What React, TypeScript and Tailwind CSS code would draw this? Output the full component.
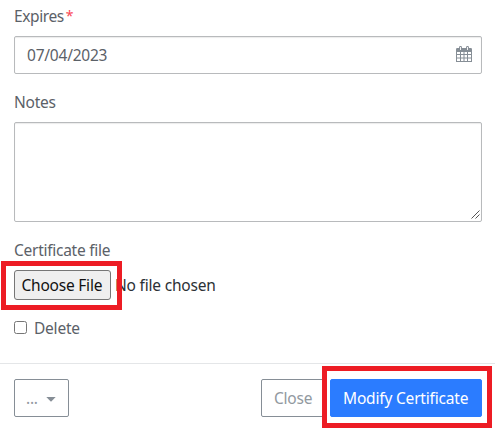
function CalendarIcon() {
  return (
    <svg width="16" height="17" viewBox="0 0 16 17" className="mr-[9px] mb-[3px] shrink-0">
      <path d="M0 4.2Q0 3 1.2 3h13.6Q16 3 16 4.2V17H0z" fill="#868e96" />
      <path
        d="M1 7h3v2H1zM5 7h2.5v2H5zM8.5 7H11v2H8.5zM12 7h3v2h-3zM1 10h3v2.5H1zM5 10h2.5v2.5H5zM8.5 10H11v2.5H8.5zM12 10h3v2.5h-3zM1 13.5h3V16H1zM5 13.5h2.5V16H5zM8.5 13.5H11V16H8.5zM12 13.5h3V16h-3z"
        fill="#fff"
      />
      <rect x="3" y="1" width="3" height="4.6" rx="1.4" fill="#868e96" />
      <rect x="10" y="1" width="3" height="4.6" rx="1.4" fill="#868e96" />
      <path d="M4.5 2v3M11.5 2v3" stroke="#fff" strokeWidth=".9" />
    </svg>
  );
}

export default function App() {
  return (
    <div className="flex h-[431px] w-[495px] flex-col overflow-hidden bg-white font-['Noto_Sans',sans-serif] text-[15.5px] leading-6 tracking-[-0.22px] text-[#5b6168]">
      <div className="flex h-[363px] flex-col pr-[13px] pl-[14px]">
        <label className="mt-[4px] flex h-6">
          <span className="tracking-[-0.4px]">Expires</span>
          <span className="ml-[2px] text-[14px] text-[#fa4654]">*</span>
        </label>
        <div className="mt-[8px] flex h-[38px] items-center justify-between rounded-[2px] border border-[#b8babc] pl-3 shadow-[inset_0_1px_1px_rgba(0,0,0,0.08)]">
          <span>07/04/2023</span>
          <CalendarIcon />
        </div>
        <label className="mt-[16px] h-6">Notes</label>
        <div className="mt-[8px] flex h-[100px] items-end justify-end rounded-[2px] border border-[#b8babc] shadow-[inset_0_1px_1px_rgba(0,0,0,0.08)]">
          <svg width="10" height="10" viewBox="0 0 10 10" className="mb-px">
            <path d="M.5 8.5l8-8M4.5 8.5l4-4" stroke="#555" strokeWidth="1" />
          </svg>
        </div>
        <label className="mt-[16px] h-6 tracking-[-0.27px]">Certificate file</label>
        <div className="mt-[8px] flex h-[30px] items-center text-[#2c3136]">
          <div className="relative flex h-[30px] w-[97px] items-center rounded-[3px] border border-[#767676] bg-[#efefef] pl-[6.5px] whitespace-nowrap text-[#111]">
            <span>Choose File</span>
            <div className="absolute -top-[10px] -left-[14px] h-[49px] w-[121px] border-5 border-[#ed1c24]" />
          </div>
          <span className="ml-1 tracking-[-0.2px]">No file chosen</span>
        </div>
        <label className="mt-4 flex h-6 items-center">
          <span className="mb-px h-[13px] w-[13px] rounded-[2.5px] border border-[#767676]" />
          <span className="ml-[7px]">Delete</span>
        </label>
      </div>
      <div className="flex h-[68px] items-start border-t border-[#e4e6e8] pt-[15px] pr-[13px] pl-[14px] text-[#92999f]">
        <div className="flex h-[38px] w-[55px] items-center rounded-[2px] border border-[#868e96] pl-[11px]">
          <span className="w-[13px]">...</span>
          <svg width="10" height="5" viewBox="0 0 10 5" className="mt-[3px] ml-[7px]">
            <path d="M.3 0h9.4L5 4.8z" fill="#868e96" />
          </svg>
        </div>
        <div className="ml-auto flex h-[38px] w-[65px] items-center rounded-[2px] border border-[#868e96] pl-3">
          Close
        </div>
        <div className="relative ml-1 flex h-[38px] w-[152px] items-center rounded-[2px] border border-[#2b7cff] bg-[#2b7cff] pl-3 tracking-[-0.18px] whitespace-nowrap text-white">
          Modify Certificate
          <div className="absolute -top-[14px] -left-[9px] h-[62px] w-[170px] border-5 border-[#ed1c24]" />
        </div>
      </div>
    </div>
  );
}
